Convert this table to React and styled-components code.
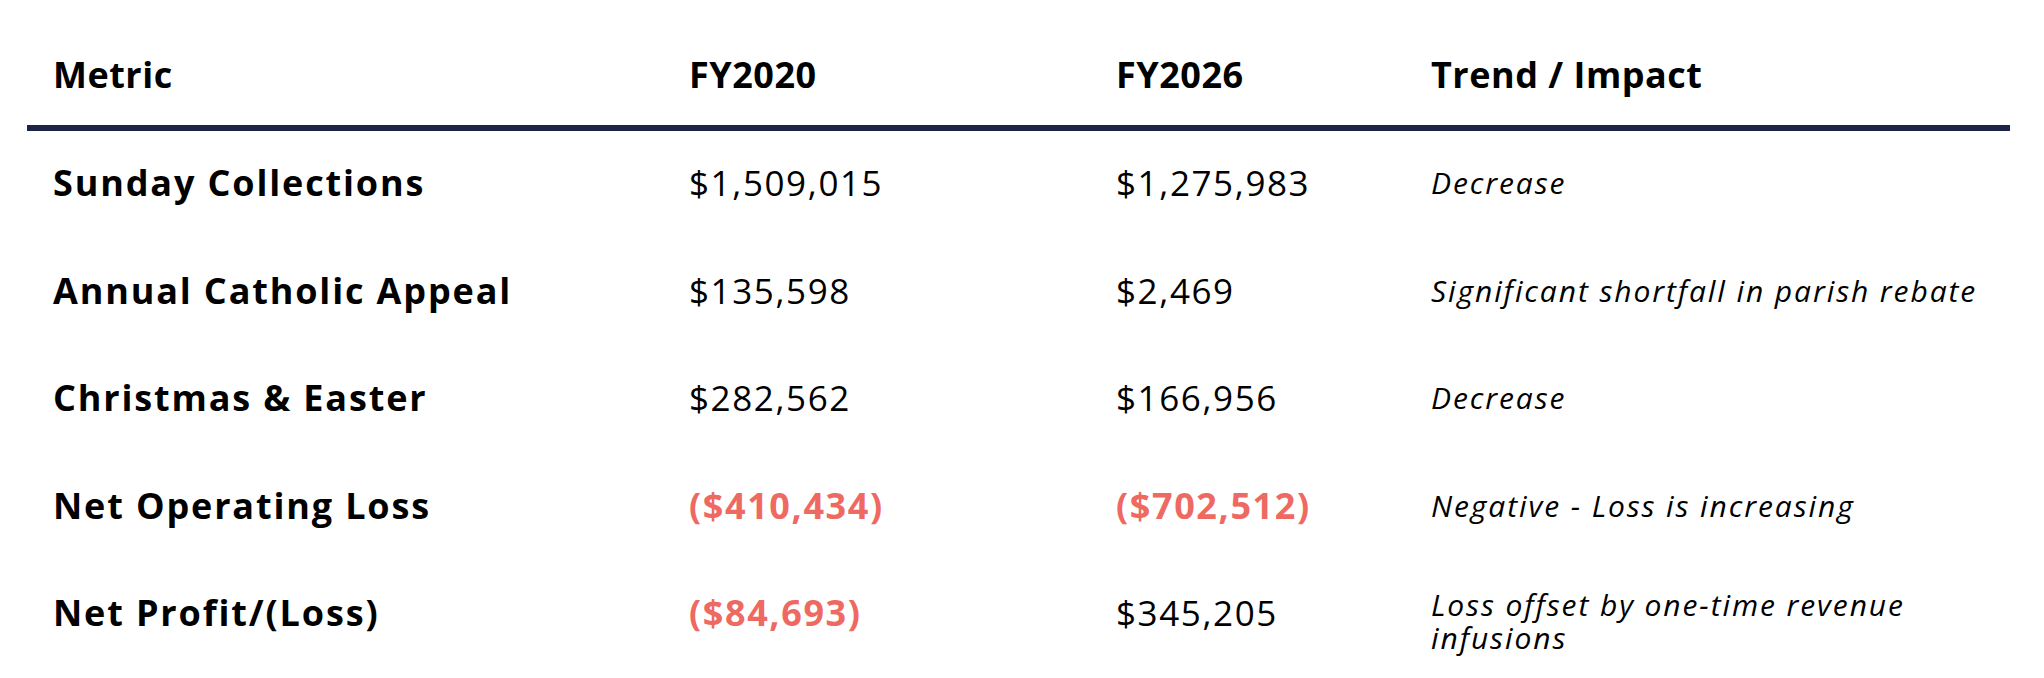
import React from 'react';
import styled, { createGlobalStyle } from 'styled-components';

const GlobalStyle = createGlobalStyle`
  html, body {
    margin: 0;
    padding: 0;
    background: #ffffff;
  }
  body {
    font-family: "Open Sans", Lato, sans-serif;
    color: #000000;
  }
`;

const Page = styled.main`
  width: 2044px;
  height: 678px;
  padding: 23px 0 0 27px;
  box-sizing: border-box;
  overflow: hidden;
`;

const Table = styled.div`
  display: grid;
  grid-template-columns: 636px 427px 315px 605px;
  width: 1983px;
`;

const HeadCell = styled.div`
  height: 102px;
  display: flex;
  align-items: center;
  padding: 0 26px;
  border-bottom: 6px solid #1c2547;
  font-size: 36px;
  font-weight: 700;
  letter-spacing: 0.5px;
`;

const Cell = styled.div`
  height: 107.5px;
  display: flex;
  align-items: center;
  padding: 0 26px 4px;
  box-sizing: border-box;
  font-size: ${(p) => (p.$bold ? '36px' : '35px')};
  font-weight: ${(p) => (p.$bold ? 700 : 400)};
  letter-spacing: ${(p) => (p.$value ? '1.6px' : '1.85px')};
  color: ${(p) => (p.$negative ? '#ee6961' : '#000000')};
`;

// wrapped notes sit a little lower in their row, as in the source slide
const TrendCell = styled(Cell)`
  padding-top: ${(p) => (p.$wrapped ? '17px' : '0')};
  font-size: 30px;
  font-weight: 400;
  font-style: italic;
  line-height: 33px;
  letter-spacing: 1.9px;
`;

const rows = [
  { metric: 'Sunday Collections', fy2020: '$1,509,015', fy2026: '$1,275,983', trend: 'Decrease' },
  { metric: 'Annual Catholic Appeal', fy2020: '$135,598', fy2026: '$2,469', trend: 'Significant shortfall in parish rebate' },
  { metric: 'Christmas & Easter', fy2020: '$282,562', fy2026: '$166,956', trend: 'Decrease' },
  { metric: 'Net Operating Loss', fy2020: '($410,434)', fy2026: '($702,512)', trend: 'Negative - Loss is increasing' },
  { metric: 'Net Profit/(Loss)', fy2020: '($84,693)', fy2026: '$345,205', trend: 'Loss offset by one-time revenue infusions', wrapped: true },
];

const isNegative = (v) => v.startsWith('(');

function ValueCell({ value }) {
  const neg = isNegative(value);
  return (
    <Cell $value $bold={neg} $negative={neg}>
      {value}
    </Cell>
  );
}

export default function App() {
  return (
    <>
      <GlobalStyle />
      <Page>
        <Table>
          <HeadCell>Metric</HeadCell>
          <HeadCell>FY2020</HeadCell>
          <HeadCell>FY2026</HeadCell>
          <HeadCell>Trend / Impact</HeadCell>
          {rows.map((row) => (
            <React.Fragment key={row.metric}>
              <Cell $bold>{row.metric}</Cell>
              <ValueCell value={row.fy2020} />
              <ValueCell value={row.fy2026} />
              <TrendCell $wrapped={row.wrapped}>{row.trend}</TrendCell>
            </React.Fragment>
          ))}
        </Table>
      </Page>
    </>
  );
}
